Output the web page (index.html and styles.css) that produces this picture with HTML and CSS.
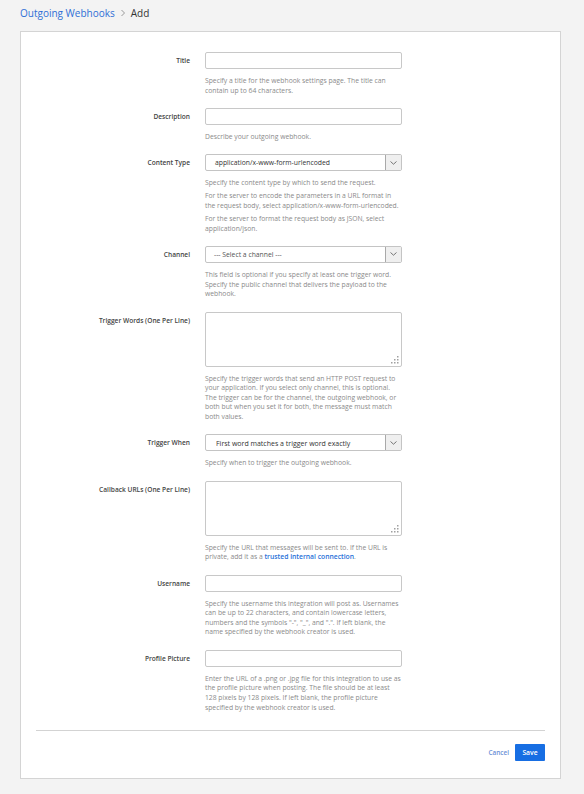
FILE: index.html
```html
<!DOCTYPE html>
<html lang="en">

<head>
    <meta charset="UTF-8">
    <meta name="viewport" content="width=device-width, initial-scale=1.0">
    <title>Outgoing Webhooks - Add</title>
    <link rel="stylesheet" href="styles.css">
</head>

<body>
    <div class="crumbs">
        <a href="#" class="crumb-link">Outgoing Webhooks</a>
        <svg class="crumb-sep" width="6" height="8" viewBox="0 0 6 8"><path d="M1.5 1 L4.5 4 L1.5 7" fill="none" stroke="#9a9a9a" stroke-width="1"/></svg>
        <span class="crumb-current">Add</span>
    </div>

    <div class="panel">
        <form class="form">
            <div class="row">
                <label class="label">Title</label>
                <div class="field">
                    <input type="text" class="input">
                    <div class="help">
                        <p>Specify a title for the webhook settings page. The title can contain up to 64 characters.</p>
                    </div>
                </div>
            </div>

            <div class="row">
                <label class="label">Description</label>
                <div class="field">
                    <input type="text" class="input">
                    <div class="help">
                        <p>Describe your outgoing webhook.</p>
                    </div>
                </div>
            </div>

            <div class="row">
                <label class="label">Content Type</label>
                <div class="field">
                    <div class="select">
                        <span class="select-text">application/x-www-form-urlencoded</span>
                        <span class="select-arrow"><svg width="7" height="4" viewBox="0 0 7 4"><path d="M0.5 0.5 L3.5 3.2 L6.5 0.5" fill="none" stroke="#666" stroke-width="0.9"/></svg></span>
                    </div>
                    <div class="help">
                        <p>Specify the content type by which to send the request.</p>
                        <p>For the server to encode the parameters in a URL format in the request body, select application/x-www-form-urlencoded.</p>
                        <p>For the server to format the request body as JSON, select application/json.</p>
                    </div>
                </div>
            </div>

            <div class="row">
                <label class="label">Channel</label>
                <div class="field">
                    <div class="select">
                        <span class="select-text select-placeholder">--- Select a channel ---</span>
                        <span class="select-arrow"><svg width="7" height="4" viewBox="0 0 7 4"><path d="M0.5 0.5 L3.5 3.2 L6.5 0.5" fill="none" stroke="#666" stroke-width="0.9"/></svg></span>
                    </div>
                    <div class="help">
                        <p>This field is optional if you specify at least one trigger word. Specify the public channel that delivers the payload to the webhook.</p>
                    </div>
                </div>
            </div>

            <div class="row">
                <label class="label">Trigger Words (One Per Line)</label>
                <div class="field">
                    <div class="textarea-wrap">
                        <textarea class="textarea"></textarea>
                        <svg class="grip" width="8" height="8" viewBox="0 0 8 8" fill="#a0a0a0">
                            <rect x="6" y="0" width="1.5" height="1.5"/>
                            <rect x="3" y="3" width="1.5" height="1.5"/><rect x="6" y="3" width="1.5" height="1.5"/>
                            <rect x="0" y="6" width="1.5" height="1.5"/><rect x="3" y="6" width="1.5" height="1.5"/><rect x="6" y="6" width="1.5" height="1.5"/>
                        </svg>
                    </div>
                    <div class="help">
                        <p>Specify the trigger words that send an HTTP POST request to your application. If you select only channel, this is optional. The trigger can be for the channel, the outgoing webhook, or both but when you set it for both, the message must match both values.</p>
                    </div>
                </div>
            </div>

            <div class="row">
                <label class="label">Trigger When</label>
                <div class="field">
                    <div class="select">
                        <span class="select-text select-big">First word matches a trigger word exactly</span>
                        <span class="select-arrow"><svg width="7" height="4" viewBox="0 0 7 4"><path d="M0.5 0.5 L3.5 3.2 L6.5 0.5" fill="none" stroke="#666" stroke-width="0.9"/></svg></span>
                    </div>
                    <div class="help">
                        <p>Specify when to trigger the outgoing webhook.</p>
                    </div>
                </div>
            </div>

            <div class="row">
                <label class="label">Callback URLs (One Per Line)</label>
                <div class="field">
                    <div class="textarea-wrap">
                        <textarea class="textarea"></textarea>
                        <svg class="grip" width="8" height="8" viewBox="0 0 8 8" fill="#a0a0a0">
                            <rect x="6" y="0" width="1.5" height="1.5"/>
                            <rect x="3" y="3" width="1.5" height="1.5"/><rect x="6" y="3" width="1.5" height="1.5"/>
                            <rect x="0" y="6" width="1.5" height="1.5"/><rect x="3" y="6" width="1.5" height="1.5"/><rect x="6" y="6" width="1.5" height="1.5"/>
                        </svg>
                    </div>
                    <div class="help">
                        <p>Specify the URL that messages will be sent to. If the URL is private, add it as a <a href="#" class="help-link">trusted internal connection</a>.</p>
                    </div>
                </div>
            </div>

            <div class="row">
                <label class="label">Username</label>
                <div class="field">
                    <input type="text" class="input">
                    <div class="help">
                        <p>Specify the username this integration will post as. Usernames can be up to 22 characters, and contain lowercase letters, numbers and the symbols "-", "_", and ".". If left blank, the name specified by the webhook creator is used.</p>
                    </div>
                </div>
            </div>

            <div class="row">
                <label class="label">Profile Picture</label>
                <div class="field">
                    <input type="text" class="input">
                    <div class="help">
                        <p>Enter the URL of a .png or .jpg file for this integration to use as the profile picture when posting. The file should be at least 128 pixels by 128 pixels. If left blank, the profile picture specified by the webhook creator is used.</p>
                    </div>
                </div>
            </div>

            <hr class="divider">

            <div class="actions">
                <a href="#" class="cancel-btn">Cancel</a>
                <button type="button" class="save-btn">Save</button>
            </div>
        </form>
    </div>
</body>

</html>
```

FILE: styles.css
```css
* {
    margin: 0;
    padding: 0;
    box-sizing: border-box;
    font-family: 'Open Sans', 'Noto Sans', sans-serif;
}

body {
    background-color: #f3f3f3;
    padding: 0 23px 0 20px;
}

.crumbs {
    height: 31px;
    display: flex;
    align-items: center;
    gap: 5px;
    padding-bottom: 6px;
    font-size: 10px;
}
.crumb-link {
    color: #2f6fd6;
    text-decoration: none;
}
.crumb-current {
    color: #333;
}

.panel {
    background-color: #fff;
    border: 1px solid #d4d4d4;
    padding: 20px 15px 16px;
    height: 748px;
}

.row {
    display: grid;
    grid-template-columns: 154px 197px;
    column-gap: 15px;
    margin-bottom: 12.8px;
}
.label {
    text-align: right;
    font-size: 6.6px;
    font-weight: 600;
    line-height: 17px;
    color: #444;
}

.input {
    display: block;
    width: 100%;
    height: 17px;
    border: 1px solid #c8c8c8;
    border-radius: 2px;
    outline: none;
}

.select {
    display: flex;
    height: 17px;
    border: 1px solid #c4c4c4;
    border-radius: 2px;
    overflow: hidden;
}
.select-text {
    flex: 1;
    padding-left: 9px;
    font-size: 6.8px;
    line-height: 15px;
    color: #333;
    white-space: nowrap;
    overflow: hidden;
}
.select-placeholder {
    padding-left: 8px;
    color: #555;
}
.select-big {
    font-size: 7px;
    line-height: 17px;
    padding-left: 10px;
}
.select-arrow {
    width: 17px;
    display: flex;
    align-items: center;
    justify-content: center;
    background-color: #efefef;
    border: 1px solid #a9a9a9;
    margin: -1px -1px -1px 0;
}

.textarea-wrap {
    position: relative;
}
.textarea {
    display: block;
    width: 100%;
    height: 55px;
    border: 1px solid #c8c8c8;
    border-radius: 2px;
    resize: none;
    outline: none;
}
.grip {
    position: absolute;
    right: 3px;
    bottom: 3px;
}

.help {
    margin-top: 7px;
    font-size: 6.78px;
    line-height: 9.6px;
    color: #8a8a8a;
}
.help p + p {
    margin-top: 3.4px;
}
.help-link {
    color: #1f6fd8;
    font-weight: 600;
    text-decoration: none;
}

.divider {
    border: none;
    border-top: 1px solid #d3d3d3;
    margin-top: 18px;
}

.actions {
    display: flex;
    justify-content: flex-end;
    align-items: center;
    gap: 6px;
    margin-top: 13px;
}
.cancel-btn {
    font-size: 6.4px;
    font-weight: 600;
    color: #6b90d6;
    text-decoration: none;
}
.save-btn {
    width: 30px;
    height: 17px;
    border: none;
    border-radius: 1px;
    background-color: #176ee3;
    color: #fff;
    font-size: 6.8px;
    font-weight: 600;
    cursor: pointer;
}
```
